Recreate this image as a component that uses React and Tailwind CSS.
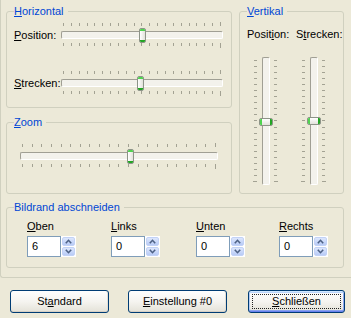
import React from 'react';

const TICKS = Array.from({ length: 21 });

function Thumb({ className, vertical }) {
  if (vertical) {
    return (
      <div className={`absolute w-[14px] h-[8px] rounded-[2px] border border-[#8d9488] bg-gradient-to-b from-white to-[#e2e2da] flex justify-between overflow-hidden ${className}`}>
        <div className="w-[2px] bg-[#4fd34f]" />
        <div className="w-[2px] bg-[#23a523]" />
      </div>
    );
  }
  return (
    <div className={`absolute top-[6px] w-[7px] h-[15px] rounded-[2px] border border-[#8d9488] bg-gradient-to-r from-white to-[#e2e2da] flex flex-col justify-between overflow-hidden ${className}`}>
      <div className="h-[2px] bg-[#4fd34f]" />
      <div className="h-[2px] bg-[#23a523]" />
    </div>
  );
}

function HSlider({ className, thumbClass }) {
  return (
    <div className={`relative h-[26px] ${className}`}>
      <div className="flex justify-between items-end px-[2px] h-[4px]">
        {TICKS.map((_, i) => (
          <div key={i} className={`w-px bg-[#a3a293] ${i === 20 ? 'h-[4px]' : 'h-[3px]'}`} />
        ))}
      </div>
      <div className="mt-[5px] h-[8px] border border-t-[#a09f94] border-l-[#a09f94] border-b-white border-r-white bg-[#f3f2ec] rounded-[2px]" />
      <div className="mt-[4px] flex justify-between items-start px-[2px] h-[5px]">
        {TICKS.map((_, i) => (
          <div key={i} className={`w-px bg-[#a3a293] ${i === 20 ? 'h-[5px]' : 'h-[3px]'}`} />
        ))}
      </div>
      <Thumb className={thumbClass} />
    </div>
  );
}

function VSlider({ className, thumbClass }) {
  return (
    <div className={`relative flex w-[25px] h-[128px] ${className}`}>
      <div className="w-[4px] flex flex-col justify-between items-end py-[3px]">
        {TICKS.map((_, i) => (
          <div key={i} className={`h-px bg-[#a3a293] ${i === 20 ? 'w-[4px]' : 'w-[3px]'}`} />
        ))}
      </div>
      <div className="ml-[5px] w-[8px] h-full border border-t-[#a09f94] border-l-[#a09f94] border-b-white border-r-white bg-[#f3f2ec] rounded-[2px]" />
      <div className="ml-[4px] w-[4px] flex flex-col justify-between items-start py-[3px]">
        {TICKS.map((_, i) => (
          <div key={i} className={`h-px bg-[#a3a293] ${i === 20 ? 'w-[4px]' : 'w-[3px]'}`} />
        ))}
      </div>
      <Thumb vertical className={thumbClass} />
    </div>
  );
}

function Group({ label, className, children }) {
  return (
    <fieldset className={`border border-[#d0d0bf] rounded-[3px] p-0 m-0 min-w-0 ${className}`}>
      <legend className="ml-[7px] pr-[4px] leading-[13px] text-[#0046d5]">{label}</legend>
      {children}
    </fieldset>
  );
}

function Arrow({ up }) {
  return (
    <svg width="7" height="5" viewBox="0 0 7 5" className="block">
      <path d={up ? 'M0.8 4.2 L3.5 1.3 L6.2 4.2' : 'M0.8 0.8 L3.5 3.7 L6.2 0.8'} fill="none" stroke="#4d6185" strokeWidth="1.6" />
    </svg>
  );
}

function Spin({ label, value, className }) {
  return (
    <div className={`flex flex-col ${className}`}>
      <div className="leading-[13px]">{label}</div>
      <div className="mt-[3px] flex">
        <div className="w-[34px] h-[21px] border border-[#7f9db9] bg-white pl-[4px] flex items-center leading-[13px]">{value}</div>
        <div className="w-[15px] h-[21px] bg-white p-px flex flex-col gap-px">
          <div className="flex-1 rounded-[2px] border border-[#c2d2f6] bg-gradient-to-b from-[#dde7fd] to-[#b8cbf6] flex items-center justify-center">
            <Arrow up />
          </div>
          <div className="flex-1 rounded-[2px] border border-[#c2d2f6] bg-gradient-to-b from-[#dde7fd] to-[#b8cbf6] flex items-center justify-center">
            <Arrow />
          </div>
        </div>
      </div>
    </div>
  );
}

function Button({ children, className, isDefault }) {
  return (
    <button
      className={`relative h-[23px] rounded-[3px] border border-[#003c74] bg-gradient-to-b from-[#fefefe] via-[#f5f4f0] to-[#e4e2d8] text-black leading-[13px] ${
        isDefault
          ? 'shadow-[inset_0_1px_0_#cee7ff,inset_0_-1px_0_#6982ee,inset_1px_0_0_#b4ccf4,inset_-1px_0_0_#8ea7ef,inset_0_2px_0_#bcd4fa,inset_0_-2px_0_#8aa2ee]'
          : 'shadow-[inset_0_-1px_0_#d6d0c5,inset_-1px_0_0_#e2ded4]'
      } ${className}`}
    >
      {isDefault && <span className="absolute inset-[3px] border border-dotted border-[#222]" />}
      {children}
    </button>
  );
}

export default function App() {
  return (
    <div className="w-[351px] h-[318px] bg-[#ece9d8] text-[11px] text-black font-['Liberation_Sans',Arial,sans-serif] overflow-hidden">
      <div className="h-[278px] border-l border-b border-[#d0d0bf] rounded-bl-[3px] pl-[5px] pt-[5px]">
        <div className="flex">
          <div className="w-[226px] flex flex-col">
            <Group label={<><u>H</u>orizontal</>} className="h-[103px]">
              <div className="pt-[4px] pl-[7px]">
                <div className="flex items-center">
                  <div className="w-[47px] leading-[13px] pt-[1px]"><u>P</u>osition:</div>
                  <HSlider className="w-[162px]" thumbClass="left-[78px]" />
                </div>
                <div className="flex items-center mt-[22px]">
                  <div className="w-[47px] leading-[13px] pt-[1px]"><u>S</u>trecken:</div>
                  <HSlider className="w-[162px]" thumbClass="left-[76px]" />
                </div>
              </div>
            </Group>
            <Group label={<><u>Z</u>oom</>} className="h-[78px] mt-[8px]">
              <div className="pt-[14px] pl-[13px]">
                <HSlider className="w-[198px]" thumbClass="left-[107px]" />
              </div>
            </Group>
          </div>
          <Group label={<><u>V</u>ertikal</>} className="w-[105px] h-[189px] ml-[7px]">
            <div className="flex pl-[7px] pt-[10px]">
              <div className="w-[49px] flex flex-col">
                <div className="leading-[13px]">Posit<u>i</u>on:</div>
                <VSlider className="mt-[16px] ml-[6px]" thumbClass="top-[61px] left-[6px]" />
              </div>
              <div className="flex flex-col">
                <div className="leading-[13px]">S<u>t</u>recken:</div>
                <VSlider className="mt-[16px] ml-[5px]" thumbClass="top-[60px] left-[6px]" />
              </div>
            </div>
          </Group>
        </div>
        <Group label="Bildrand abschneiden" className="w-[338px] h-[67px] mt-[7px]">
          <div className="flex pl-[20px] pt-[6px]">
            <Spin className="w-[84px]" label={<><u>O</u>ben</>} value="6" />
            <Spin className="w-[85px]" label={<><u>L</u>inks</>} value="0" />
            <Spin className="w-[83px]" label={<><u>U</u>nten</>} value="0" />
            <Spin className="w-[60px]" label={<><u>R</u>echts</>} value="0" />
          </div>
        </Group>
      </div>
      <div className="flex mt-[12px]">
        <Button className="ml-[10px] w-[99px]">St<u>a</u>ndard</Button>
        <Button className="ml-[19px] w-[99px]"><u>E</u>instellung #0</Button>
        <Button isDefault className="ml-[21px] w-[97px]"><u>S</u>chließen</Button>
      </div>
    </div>
  );
}
